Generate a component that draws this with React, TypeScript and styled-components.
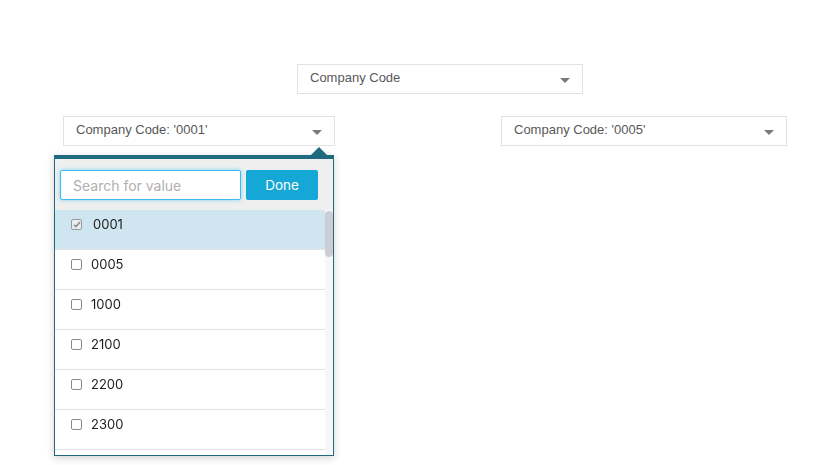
import styled, { createGlobalStyle } from "styled-components";

const GlobalStyle = createGlobalStyle`
  body {
    margin: 0;
    background: #ffffff;
    font-family: "Liberation Sans", Arial, sans-serif;
  }
`;

// only the rows that fit in the picker are rendered, the rest is "below the fold"
const companyCodes = ["0001", "0005", "1000", "2100", "2200", "2300"];

const Page = styled.div`
  padding-top: 64px;
  height: 465px;
  box-sizing: border-box;
`;

const TopRow = styled.div`
  display: flex;
  padding-left: 297px;
`;

const FilterRow = styled.div`
  display: flex;
  gap: 166px;
  margin-top: 22px;
  padding-left: 63px;
`;

const FilterWrap = styled.div`
  position: relative;
`;

const Select = styled.div<{ $width: number }>`
  width: ${(p) => p.$width}px;
  height: 30px;
  box-sizing: border-box;
  border: 1px solid #e2e2e2;
  background: #fff;
  display: flex;
  align-items: center;
  justify-content: space-between;
  padding: 0 12px 3px 12px;
  font-size: 13px;
  color: #585858;
  cursor: pointer;
`;

const Caret = styled.span`
  width: 0;
  height: 0;
  margin-top: 6px;
  border-left: 5px solid transparent;
  border-right: 5px solid transparent;
  border-top: 5px solid #7a7a7a;
`;

const Popup = styled.div`
  position: absolute;
  top: calc(100% + 9px);
  left: -9px;
  width: 280px;
  height: 301px;
  box-sizing: border-box;
  border: 1px solid #1f6a7e;
  border-top-width: 4px;
  background: #fff;
  box-shadow: 0 2px 8px rgba(0, 0, 0, 0.18);
  display: flex;
  flex-direction: column;
  font-family: Inter, "Noto Sans", sans-serif;
  z-index: 2;

  &::before {
    content: "";
    position: absolute;
    top: -12px;
    right: 6px;
    border-left: 8px solid transparent;
    border-right: 8px solid transparent;
    border-bottom: 8px solid #1f6a7e;
  }
`;

const SearchBar = styled.div`
  display: flex;
  gap: 5px;
  padding: 11px 5px 10px 5px;
  background: #efefef;
`;

const SearchInput = styled.input`
  width: 181px;
  height: 30px;
  box-sizing: border-box;
  border: 1px solid #3dbdee;
  box-shadow: 0 0 4px #7fd3f3;
  border-radius: 2px;
  padding: 0 12px;
  font-family: Inter, "Noto Sans", sans-serif;
  font-size: 14px;
  color: #333;
  outline: none;
  &::placeholder {
    color: #b0b0b0;
  }
`;

const DoneButton = styled.button`
  width: 72px;
  height: 30px;
  border: none;
  border-radius: 2px;
  background: #15a8d6;
  color: #fff;
  font-family: Inter, "Noto Sans", sans-serif;
  font-size: 13.5px;
  cursor: pointer;
`;

const ListArea = styled.div`
  flex: 1;
  display: flex;
  overflow: hidden;
`;

const Rows = styled.div`
  flex: 1;
`;

const ScrollTrack = styled.div`
  width: 8px;
  background: #f7f7f9;
  padding-top: 1px;
`;

const ScrollThumb = styled.div`
  height: 46px;
  border-radius: 4px;
  background: #cdcdd6;
`;

const Row = styled.label<{ $selected: boolean }>`
  display: flex;
  align-items: flex-start;
  gap: ${(p) => (p.$selected ? 11 : 9)}px;
  height: 40px;
  box-sizing: border-box;
  padding: 7px 0 0 16px;
  border-bottom: 1px solid #e3e3e3;
  background: ${(p) => (p.$selected ? "#cfe6f0" : "#fff")};
  font-size: 13px;
  line-height: 14px;
  color: #1c1c1c;
  cursor: pointer;
`;

const Box = styled.span<{ $checked: boolean }>`
  width: 11px;
  height: 11px;
  box-sizing: border-box;
  margin-top: 2px;
  border: 1px solid ${(p) => (p.$checked ? "#9a9a9a" : "#8a8a8a")};
  border-radius: 2px;
  background: ${(p) => (p.$checked ? "#e8eef0" : "#fff")};
  display: flex;
  align-items: center;
  justify-content: center;
  flex-shrink: 0;
`;

export default function App() {
  return (
    <Page>
      <GlobalStyle />
      <TopRow>
        <Select $width={286}>
          Company Code
          <Caret />
        </Select>
      </TopRow>

      <FilterRow>
        <FilterWrap>
          <Select $width={272}>
            Company Code: '0001'
            <Caret />
          </Select>

          {/* value picker for the first filter */}
          <Popup>
            <SearchBar>
              <SearchInput placeholder="Search for value" autoFocus />
              <DoneButton>Done</DoneButton>
            </SearchBar>
            <ListArea>
              <Rows>
                {companyCodes.map((code, i) => (
                  <Row key={code} $selected={i === 0}>
                    <Box $checked={i === 0}>
                      {i === 0 && (
                        <svg width="8" height="7" viewBox="0 0 9 8">
                          <path
                            d="M1 4.2 L3.4 6.4 L8 1.2"
                            fill="none"
                            stroke="#8c8c8c"
                            strokeWidth="1.7"
                          />
                        </svg>
                      )}
                    </Box>
                    {code}
                  </Row>
                ))}
              </Rows>
              <ScrollTrack>
                <ScrollThumb />
              </ScrollTrack>
            </ListArea>
          </Popup>
        </FilterWrap>

        <Select $width={286}>
          Company Code: '0005'
          <Caret />
        </Select>
      </FilterRow>
    </Page>
  );
}
